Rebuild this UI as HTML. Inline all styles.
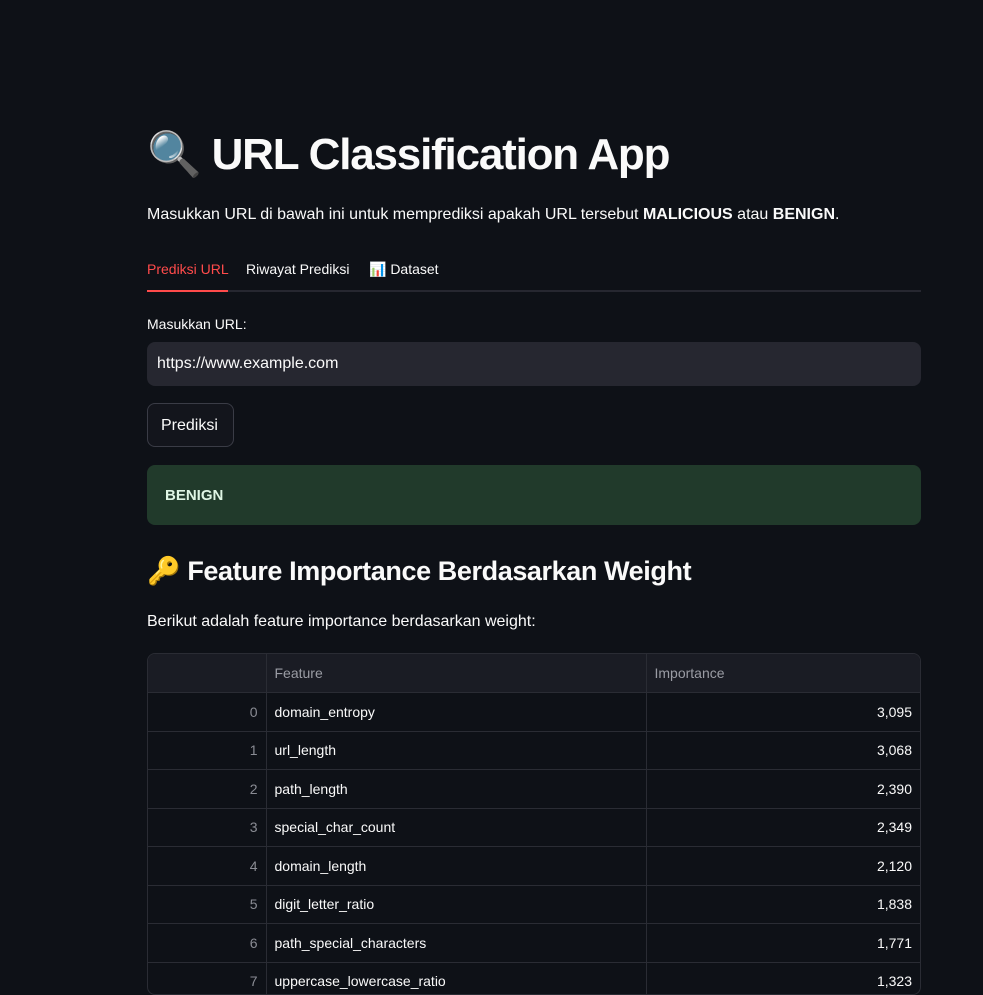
<!DOCTYPE html><html><head><style>
body{margin:0;background:#0e1117;width:983px;height:987px;overflow:hidden;font-family:"Liberation Sans","DejaVu Sans",sans-serif;color:#fafafa}
.c{position:absolute;left:147px;width:774px}
h1{position:absolute;left:147px;top:128px;margin:0;font-size:44px;font-weight:700;letter-spacing:-1.2px}
h2{position:absolute;left:147px;top:555px;margin:0;font-size:27px;font-weight:700;letter-spacing:-0.4px}
.t{position:absolute;font-size:16px}
table{border-collapse:collapse;width:100%;font-size:14px}
td{height:38.5px;border:1px solid #2a2c34;padding:0 8px;box-sizing:border-box}
tr td:first-child{border-left:none}
tr td:last-child{border-right:none}
tr:first-child td{border-top:none}
</style></head><body>
<h1>🔍 URL Classification App</h1>
<div class="t" style="left:147px;top:206px">Masukkan URL di bawah ini untuk memprediksi apakah URL tersebut <b>MALICIOUS</b> atau <b>BENIGN</b>.</div>
<div class="t" style="left:147px;top:261px;font-size:14px;color:#ff4b4b">Prediksi URL</div>
<div class="t" style="left:246px;top:261px;font-size:14px">Riwayat Prediksi</div>
<div class="t" style="left:369px;top:261px;font-size:14px">📊 Dataset</div>
<div class="c" style="top:290px;height:2px;background:#262730"></div>
<div style="position:absolute;left:147px;top:290px;width:81px;height:2px;background:#ff4b4b"></div>
<div class="t" style="left:147px;top:316px;font-size:14px">Masukkan URL:</div>
<div class="c" style="top:342px;height:44px;background:#262730;border-radius:8px"><span style="position:absolute;left:10px;top:13px;font-size:16px">https://www.example.com</span></div>
<div style="position:absolute;left:147px;top:403px;width:85px;height:42px;border:1px solid #3a3c46;border-radius:8px;background:#13151c"><span style="position:absolute;left:13px;top:13px;font-size:16px">Prediksi</span></div>
<div class="c" style="top:465px;height:60px;background:#213a2b;border-radius:8px"><b style="position:absolute;left:18px;top:22px;font-size:15px;color:#dff5e4">BENIGN</b></div>
<h2>🔑 Feature Importance Berdasarkan Weight</h2>
<div class="t" style="left:147px;top:613px">Berikut adalah feature importance berdasarkan weight:</div>
<div class="c" style="top:653px;width:772px;border:1px solid #2a2c34;border-radius:8px;overflow:hidden;height:340px">
<table>
<tr style="background:#1a1c24;color:#9a9ca4"><td style="width:118px"></td><td style="width:380px">Feature</td><td>Importance</td></tr>
<tr><td style="text-align:right;color:#8a8c94">0</td><td>domain_entropy</td><td style="text-align:right">3,095</td></tr>
<tr><td style="text-align:right;color:#8a8c94">1</td><td>url_length</td><td style="text-align:right">3,068</td></tr>
<tr><td style="text-align:right;color:#8a8c94">2</td><td>path_length</td><td style="text-align:right">2,390</td></tr>
<tr><td style="text-align:right;color:#8a8c94">3</td><td>special_char_count</td><td style="text-align:right">2,349</td></tr>
<tr><td style="text-align:right;color:#8a8c94">4</td><td>domain_length</td><td style="text-align:right">2,120</td></tr>
<tr><td style="text-align:right;color:#8a8c94">5</td><td>digit_letter_ratio</td><td style="text-align:right">1,838</td></tr>
<tr><td style="text-align:right;color:#8a8c94">6</td><td>path_special_characters</td><td style="text-align:right">1,771</td></tr>
<tr><td style="text-align:right;color:#8a8c94">7</td><td>uppercase_lowercase_ratio</td><td style="text-align:right">1,323</td></tr>
</table></div>
</body></html>
